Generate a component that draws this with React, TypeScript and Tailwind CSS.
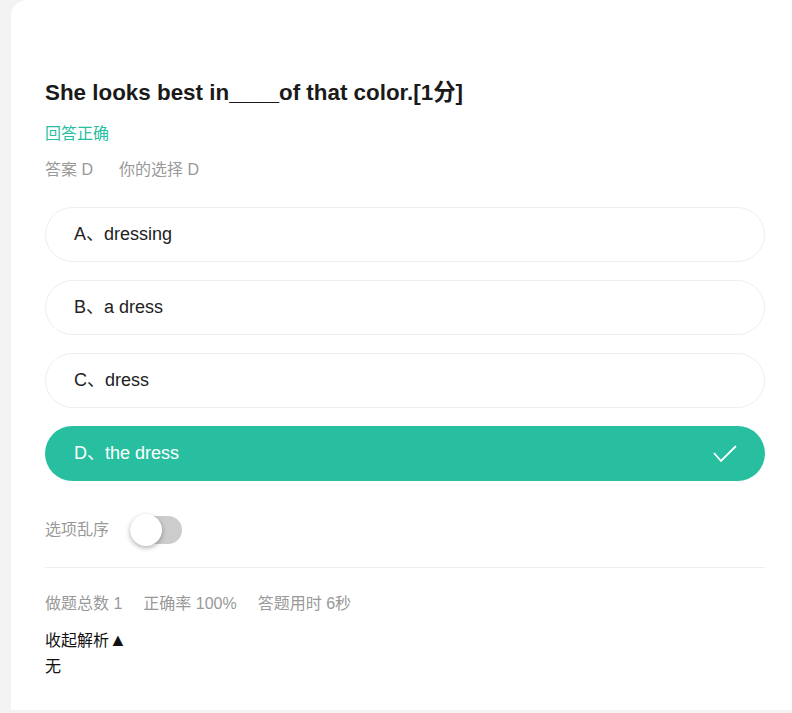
const options = [
  { key: 'A', text: 'dressing' },
  { key: 'B', text: 'a dress' },
  { key: 'C', text: 'dress' },
  { key: 'D', text: 'the dress' },
]

export default function App() {
  const chosen = 'D'
  return (
    <div className="min-h-[713px] bg-[#f3f3f3] pl-[11px] pb-[3px] font-['Liberation_Sans','Noto_Sans_CJK_SC',sans-serif]">
      <div className="h-[710px] rounded-tl-[16px] bg-white pl-[34px] pr-[27px] pt-[78px]">
        <h1 className="text-[22.4px] font-bold leading-[30px] text-[#1a1a1a]">
          She looks best in____of that color.[1分]
        </h1>
        <p className="mt-[15px] text-[16px] leading-[22px] text-[#27bf9f]">回答正确</p>
        <div className="mt-[14px] flex gap-[26px] text-[16px] leading-[22px] text-[#999]">
          <span>答案 D</span>
          <span>你的选择 D</span>
        </div>

        <div className="mt-[26px] flex flex-col gap-[18px]">
          {options.map(o => {
            const active = o.key === chosen
            return (
              <div
                key={o.key}
                className={
                  active
                    ? 'flex h-[55px] items-center justify-between rounded-full bg-[#27bf9f] pl-[29px] pr-[28px] text-[18px] text-white'
                    : 'flex h-[55px] items-center justify-between rounded-full border border-[#eeeeee] pl-[28px] pr-[28px] text-[18px] text-[#222]'
                }
              >
                <span>{o.key}、{o.text}</span>
                {active && (
                  <svg width="24" height="18" viewBox="0 0 24 18" fill="none" stroke="white" strokeWidth="1.8">
                    <path d="M1 8l7 8L23 1" />
                  </svg>
                )}
              </div>
            )
          })}
        </div>

        <div className="mt-[33px] flex h-[32px] items-center gap-[21px]">
          <span className="text-[16px] text-[#999]">选项乱序</span>
          <div className="relative h-[28px] w-[52px] rounded-full bg-[#cccccc]">
            <div className="absolute left-0 top-[-2px] h-[32px] w-[32px] rounded-full bg-white shadow-[0_2px_5px_rgba(0,0,0,0.3)]" />
          </div>
        </div>

        <div className="mt-[21px] border-t border-[#eeeeee]" />

        <div className="mt-[25px] flex gap-[21px] text-[16px] leading-[22px] text-[#999]">
          <span>做题总数 1</span>
          <span>正确率 100%</span>
          <span>答题用时 6秒</span>
        </div>
        <p className="mt-[14px] text-[16px] leading-[22px] text-[#111]">
          收起解析<span className="text-[18px] leading-[22px]">▲</span>
        </p>
        <p className="mt-[4px] text-[16px] leading-[22px] text-[#111]">无</p>
      </div>
    </div>
  )
}
